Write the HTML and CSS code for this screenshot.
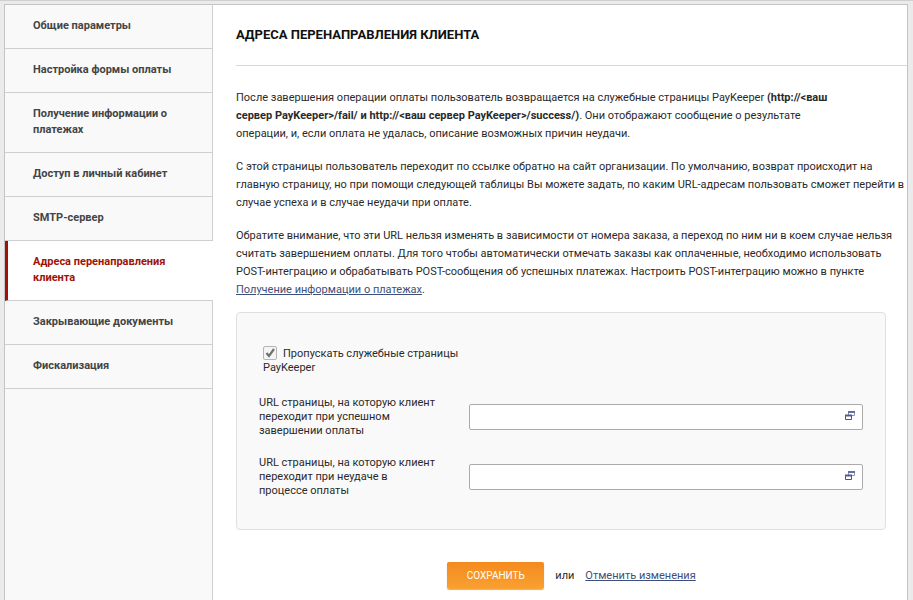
FILE: index.html
```html
<!DOCTYPE html>
<html lang="ru">
<head>
<meta charset="utf-8">
<title>Адреса перенаправления клиента</title>
<link rel="stylesheet" href="styles.css">
</head>
<body>
<div class="frame">
  <nav class="sidebar">
    <a href="#">Общие параметры</a>
    <a href="#">Настройка формы оплаты</a>
    <a href="#">Получение информации о<br>платежах</a>
    <a href="#">Доступ в личный кабинет</a>
    <a href="#">SMTP-сервер</a>
    <a href="#" class="active">Адреса перенаправления<br>клиента</a>
    <a href="#">Закрывающие документы</a>
    <a href="#">Фискализация</a>
  </nav>
  <main class="content">
    <h1>Адреса перенаправления клиента</h1>
    <div class="intro">
      <p>После завершения операции оплаты пользователь возвращается на служебные страницы PayKeeper <b>(http://&lt;ваш<br>сервер PayKeeper&gt;/fail/ и http://&lt;ваш сервер PayKeeper&gt;/success/)</b>. Они отображают сообщение о результате<br>операции, и, если оплата не удалась, описание возможных причин неудачи.</p>
      <p>С этой страницы пользователь переходит по ссылке обратно на сайт организации. По умолчанию, возврат происходит на<br>главную страницу, но при помощи следующей таблицы Вы можете задать, по каким URL-адресам пользовать сможет перейти в<br>случае успеха и в случае неудачи при оплате.</p>
      <p>Обратите внимание, что эти URL нельзя изменять в зависимости от номера заказа, а переход по ним ни в коем случае нельзя<br>считать завершением оплаты. Для того чтобы автоматически отмечать заказы как оплаченные, необходимо использовать<br>POST-интеграцию и обрабатывать POST-сообщения об успешных платежах. Настроить POST-интеграцию можно в пункте<br><a href="#">Получение информации о платежах</a>.</p>
    </div>
    <form>
      <div class="panel">
        <div class="check">
          <span class="box"><input type="checkbox" id="skip" checked><svg width="14" height="14" viewBox="0 0 14 14"><path d="M3.500 7l2.500 3 5-7" fill="none" stroke="#707070" stroke-width="2.200"/></svg></span><label for="skip">Пропускать служебные страницы<br>PayKeeper</label>
        </div>
        <div class="row">
          <label for="ok">URL страницы, на которую клиент<br>переходит при успешном<br>завершении оплаты</label>
          <div class="field">
            <input type="text" id="ok">
            <svg width="10" height="9" viewBox="0 0 10 9"><path d="M3.500 4V1h6v3.500H7" fill="none" stroke="#8d93b4"/><path d="M3 1h7" stroke="#66709c" stroke-width="2"/><path d="M.5 4.500h6v4h-6z" fill="#fff" stroke="#4a527f"/><path d="M0 4.500h7" stroke="#4f5b92" stroke-width="2"/></svg>
          </div>
        </div>
        <div class="row">
          <label for="fail">URL страницы, на которую клиент<br>переходит при неудаче в<br>процессе оплаты</label>
          <div class="field">
            <input type="text" id="fail">
            <svg width="10" height="9" viewBox="0 0 10 9"><path d="M3.500 4V1h6v3.500H7" fill="none" stroke="#8d93b4"/><path d="M3 1h7" stroke="#66709c" stroke-width="2"/><path d="M.5 4.500h6v4h-6z" fill="#fff" stroke="#4a527f"/><path d="M0 4.500h7" stroke="#4f5b92" stroke-width="2"/></svg>
          </div>
        </div>
      </div>
      <div class="actions">
        <button type="submit">Сохранить</button>
        <span>или</span>
        <a href="#">Отменить изменения</a>
      </div>
    </form>
  </main>
</div>
</body>
</html>
```
FILE: styles.css
```css
* { box-sizing: border-box; }
body {
  margin: 0;
  padding: 3px 5px 0 4px;
  background: #ebebeb;
  border-top: 1px solid #d0d0d0;
  font: 11px/18px Roboto, "Liberation Sans", sans-serif;
  color: #2a2a2a;
}
.frame {
  display: flex;
  min-height: calc(100vh - 4px);
  background: #fff;
  border: 1px solid #c4c4c4;
  border-bottom: 0;
}
.sidebar {
  flex: 0 0 208px;
  background: #f9f9f9;
  box-shadow: inset -1px 0 #cfcfcf;
}
.sidebar a {
  display: block;
  padding: 13px 10px 14px 28px;
  border-bottom: 1px solid #cfcfcf;
  font-weight: 700;
  line-height: 16px;
  color: #444;
  text-decoration: none;
  white-space: nowrap;
}
.sidebar .active {
  padding-left: 25px;
  background: #fff;
  border-left: 3px solid #a01208;
  color: #a01208;
}
.content { flex: 1; min-width: 0; padding-left: 23px; }
h1 {
  margin: 0;
  padding: 20px 0;
  border-bottom: 1px solid #d8d8d8;
  font-size: 13px;
  line-height: 20px;
  text-transform: uppercase;
  color: #111;
}
.intro { padding: 23px 0 13px; white-space: nowrap; }
.intro p { margin: 0; }
.intro p + p { margin-top: 15px; }
a { color: #3d4f7a; }
.panel {
  margin-right: 21px;
  padding: 33px 22px 31px;
  background: #f9f9f9;
  border: 1px solid #e0e0e0;
  border-radius: 4px;
  line-height: 14px;
}
.check { padding-left: 4px; }
.box {
  position: relative;
  display: inline-block;
  width: 14px;
  height: 14px;
  margin-right: 6px;
  vertical-align: -3px;
}
.box input {
  appearance: none;
  display: block;
  width: 100%;
  height: 100%;
  margin: 0;
  border: 1px solid #b5b5b5;
  border-radius: 2px;
  background: #f4f4f4;
}
.box svg { position: absolute; inset: 0; visibility: hidden; pointer-events: none; }
.box input:checked + svg { visibility: visible; }
.row { display: flex; align-items: center; margin-top: 18px; }
.check + .row { margin-top: 21px; }
.row label { flex: 0 0 210px; }
.field { position: relative; flex: 1; }
.field input {
  display: block;
  width: 100%;
  height: 26px;
  padding: 0 28px 0 6px;
  font: inherit;
  border: 1px solid #ababab;
  border-radius: 2px;
  background: #fff;
}
.field svg { position: absolute; right: 8px; top: 7px; }
.actions {
  display: flex;
  align-items: center;
  justify-content: center;
  gap: 11px;
  padding: 32px 0 10px;
}
button {
  width: 97px;
  height: 27px;
  padding: 0;
  font: inherit;
  font-size: 10px;
  text-transform: uppercase;
  color: #fff;
  background: linear-gradient(#f48a1e, #f9a131);
  border: 0;
  border-radius: 2px;
  box-shadow: 0 1px 1px #b8b8b8;
}
```
